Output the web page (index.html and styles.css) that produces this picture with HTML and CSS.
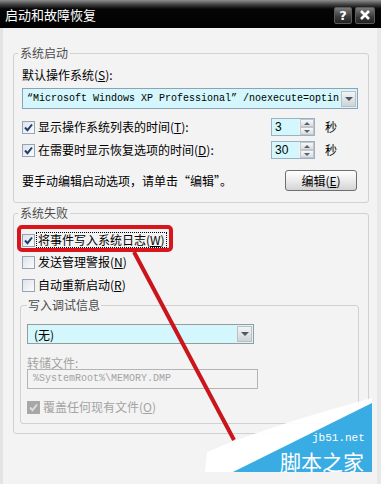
FILE: index.html
```html
<!DOCTYPE html>
<html>
<head>
	<meta charset="utf-8">
	<title>启动和故障恢复</title>
	<link rel="stylesheet" href="styles.css">
</head>
<body>
	<div class="window">
		<div class="titlebar">
			<span class="title">启动和故障恢复</span>
			<div class="caption-btns">
				<span class="cbtn help">?</span>
				<span class="cbtn close">
					<svg width="12" height="10" viewBox="0 0 12 10"><path d="M2 1 L10 9 M10 1 L2 9" stroke="#fff" stroke-width="2.6"/></svg>
				</span>
			</div>
		</div>

		<div class="client">
			<fieldset class="group">
				<legend>系统启动</legend>
				<div class="label-row">默认操作系统(<u>S</u>):</div>
				<div class="combo wide">
					<span class="combo-text mono">“Microsoft Windows XP Professional” /noexecute=optin</span>
					<span class="drop"><span class="tri"></span></span>
				</div>
				<div class="check-row spin-row first">
					<span class="check on"><svg width="11" height="11" viewBox="0 0 11 11"><path d="M2 5.5 L4.5 8.2 L9 2.5" stroke="#1d3f70" stroke-width="2" fill="none"/></svg></span>
					<span class="check-label">显示操作系统列表的时间(<u>T</u>):</span>
					<div class="spin">
						<span class="spin-val">3</span>
						<span class="spin-btns"><span class="up"></span><span class="down"></span></span>
					</div>
					<span class="unit">秒</span>
				</div>
				<div class="check-row spin-row second">
					<span class="check on"><svg width="11" height="11" viewBox="0 0 11 11"><path d="M2 5.5 L4.5 8.2 L9 2.5" stroke="#1d3f70" stroke-width="2" fill="none"/></svg></span>
					<span class="check-label">在需要时显示恢复选项的时间(<u>D</u>):</span>
					<div class="spin">
						<span class="spin-val">30</span>
						<span class="spin-btns"><span class="up"></span><span class="down"></span></span>
					</div>
					<span class="unit">秒</span>
				</div>
				<div class="edit-row">
					<span>要手动编辑启动选项，请单击“编辑”。</span>
					<button class="btn">编辑(<u>E</u>)</button>
				</div>
			</fieldset>

			<fieldset class="group failure">
				<legend>系统失败</legend>
				<div class="check-row row-w">
					<span class="check on"><svg width="11" height="11" viewBox="0 0 11 11"><path d="M2 5.5 L4.5 8.2 L9 2.5" stroke="#1d3f70" stroke-width="2" fill="none"/></svg></span>
					<span class="check-label focus">将事件写入系统日志(<u>W</u>)</span>
				</div>
				<div class="check-row row-n">
					<span class="check"></span>
					<span class="check-label">发送管理警报(<u>N</u>)</span>
				</div>
				<div class="check-row row-r">
					<span class="check"></span>
					<span class="check-label">自动重新启动(<u>R</u>)</span>
				</div>

				<fieldset class="group inner">
					<legend>写入调试信息</legend>
					<div class="combo debug">
						<span class="combo-text">(无)</span>
						<span class="drop"><span class="tri"></span></span>
					</div>
					<div class="dump-label">转储文件:</div>
					<div class="textfield mono">%SystemRoot%\MEMORY.DMP</div>
					<div class="check-row row-o">
						<span class="check disabled"><svg width="11" height="11" viewBox="0 0 11 11"><path d="M2 5.5 L4.5 8.2 L9 2.5" stroke="#dcdcdc" stroke-width="2" fill="none"/></svg></span>
						<span class="check-label muted">覆盖任何现有文件(<u>O</u>)</span>
					</div>
				</fieldset>
			</fieldset>
		</div>

		<svg class="overlay" width="381" height="484" viewBox="0 0 381 484">
			<rect x="19" y="227" width="152" height="23" rx="3" fill="none" stroke="#d8141c" stroke-width="4"/>
			<line x1="134" y1="252" x2="234" y2="440" stroke="#c9151b" stroke-width="4"/>
			<path d="M205 472 L207 452 Q262 428 372 398 L372 404 L233 472 Z" fill="#ffffff" opacity="0.93"/>
			<polygon points="233,472 372,403 372,472" fill="#3aace4"/>
			<text x="312" y="441" class="wm-url">jb51.net</text>
			<text x="280" y="470" class="wm-name">脚本之家</text>
		</svg>
	</div>
</body>
</html>
```

FILE: styles.css
```css
body {
	margin: 0;
	padding: 0;
	font-family: "Noto Sans CJK SC", sans-serif;
	font-size: 12px;
	background-color: #f3f3f3;
	color: #000;
}

u {
	text-decoration: underline;
}

.mono {
	font-family: "Liberation Mono", monospace;
	font-size: 10px;
}

.window {
	width: 381px;
	height: 484px;
	position: relative;
	overflow: hidden;
	display: flex;
	flex-direction: column;
	background-color: #f3f3f3;
}

/* title bar */
.titlebar {
	height: 28px;
	flex: none;
	display: flex;
	align-items: center;
	justify-content: space-between;
	padding: 0 6px 0 5px;
	box-sizing: border-box;
	background: linear-gradient(#8e8e8e, #3a3a3a 5px, #060606 9px, #000);
	color: white;
}

.title {
	font-size: 13px;
	line-height: 16px;
	padding-top: 1px;
}

.caption-btns {
	display: flex;
	gap: 3px;
	padding-top: 2px;
}

.cbtn {
	height: 17px;
	box-sizing: border-box;
	border: 1px solid #5a5a5a;
	border-radius: 2px;
	background: linear-gradient(#7a7a7a, #3a3a3a 60%, #222);
	display: flex;
	align-items: center;
	justify-content: center;
	color: white;
	font: bold 13px "DejaVu Sans", sans-serif;
}

.help {
	width: 18px;
}

.close {
	width: 20px;
}

/* client area */
.client {
	flex: 1;
	padding: 18px 12px 0 13px;
	box-shadow: inset 3px 0 #e4e4e4, inset -4px 0 #e8e8e8;
}

.group {
	margin: 0;
	min-width: 0;
	border: 1px solid #d2d1cf;
	border-radius: 3px;
	padding: 0 10px 11px 8px;
}

.group legend {
	padding: 0 2px;
	margin-left: -4px;
	line-height: 14px;
	color: #4c4c4c;
}

.failure {
	margin-top: 3px;
	padding-bottom: 9px;
}

.inner {
	margin: 5px -1px 0 -2px;
	padding: 0 8px 8px 6px;
}

.inner legend {
	margin-left: 0;
	padding: 0 1px;
}

.label-row {
	margin-top: 8px;
	line-height: 14px;
}

/* combo boxes */
.combo {
	display: flex;
	align-items: center;
	justify-content: space-between;
	box-sizing: border-box;
	border: 1px solid #8da2b6;
	background-color: #d3f7fc;
	padding: 0 1px 0 4px;
}

.wide {
	margin-top: 6px;
	height: 21px;
}

.debug {
	margin-top: 12px;
	width: 227px;
	height: 20px;
	padding-left: 6px;
	border-color: #9a9a9a;
}

.combo-text {
	white-space: nowrap;
	overflow: hidden;
}

.drop {
	width: 15px;
	height: 16px;
	flex: none;
	box-sizing: border-box;
	border: 1px solid #b8c0c8;
	background: linear-gradient(#f4f4f4, #cfd3d7);
	display: flex;
	align-items: center;
	justify-content: center;
}

.tri {
	width: 0;
	height: 0;
	border-left: 4px solid transparent;
	border-right: 4px solid transparent;
	border-top: 4px solid #4d5864;
}

/* check rows */
.check-row {
	display: flex;
	align-items: center;
	height: 16px;
}

.spin-row {
	height: 18px;
}

.first {
	margin-top: 9px;
}

.second {
	margin-top: 5px;
}

.row-w {
	margin-top: 12px;
}

.row-n {
	margin-top: 6px;
}

.row-r {
	margin-top: 7px;
}

.row-o {
	margin-top: 10px;
}

.check {
	width: 13px;
	height: 13px;
	flex: none;
	box-sizing: border-box;
	border: 1px solid #95a5b5;
	background: linear-gradient(135deg, #dfe3e8, #fbfbfb);
	display: flex;
	align-items: center;
	justify-content: center;
}

.check.disabled {
	border-color: #a8a8a8;
	background: #a7a7a7;
}

.check-label {
	margin-left: 3px;
	line-height: 14px;
	white-space: nowrap;
}

.check-label.focus {
	outline: 1px dotted #000;
	padding: 0 1px;
	margin-left: 2px;
}

.muted,
.dump-label,
.textfield {
	color: #a3a3a3;
}

/* spin boxes */
.spin {
	margin-left: auto;
	width: 44px;
	height: 18px;
	box-sizing: border-box;
	border: 1px solid #9ab0c4;
	background-color: #d3f7fc;
	display: flex;
}

.spin-val {
	flex: 1;
	padding-left: 3px;
	line-height: 16px;
	font-family: "Liberation Sans", sans-serif;
	font-size: 12px;
}

.spin-btns {
	width: 15px;
	display: flex;
	flex-direction: column;
	background: #f3f3f3;
}

.spin-btns span {
	flex: 1;
	margin: 0 0 0 1px;
	border: 1px solid #c2c6ca;
	background: linear-gradient(#f8f8f8, #d9dcdf);
	position: relative;
}

.spin-btns .up::after,
.spin-btns .down::after {
	content: "";
	position: absolute;
	left: 3px;
	top: 2px;
	border-left: 3px solid transparent;
	border-right: 3px solid transparent;
}

.spin-btns .up::after {
	border-bottom: 3px solid #58626c;
}

.spin-btns .down::after {
	border-top: 3px solid #58626c;
}

.unit {
	width: 12px;
	margin: 0 21px 0 10px;
	line-height: 14px;
}

/* edit row */
.edit-row {
	margin-top: 11px;
	height: 21px;
	display: flex;
	align-items: center;
	justify-content: space-between;
}

.btn {
	width: 72px;
	height: 21px;
	margin-right: 1px;
	padding: 0;
	border: 1px solid #6f6f6f;
	border-radius: 3px;
	background: linear-gradient(#ffffff, #ececec 50%, #d4d4d4);
	font-family: "Noto Sans CJK SC", sans-serif;
	font-size: 12px;
	color: #000;
}

/* dump file */
.dump-label {
	margin-top: 13px;
	line-height: 12px;
}

.textfield {
	width: 231px;
	height: 20px;
	box-sizing: border-box;
	border: 1px solid #b4b4b4;
	padding-left: 5px;
	line-height: 18px;
}

/* annotation layer */
.overlay {
	position: absolute;
	top: 0;
	left: 0;
	pointer-events: none;
}

.wm-url {
	font-family: "Liberation Mono", monospace;
	font-size: 11px;
	fill: white;
}

.wm-name {
	font-family: "Noto Sans CJK SC", sans-serif;
	font-size: 21px;
	fill: white;
}
```
